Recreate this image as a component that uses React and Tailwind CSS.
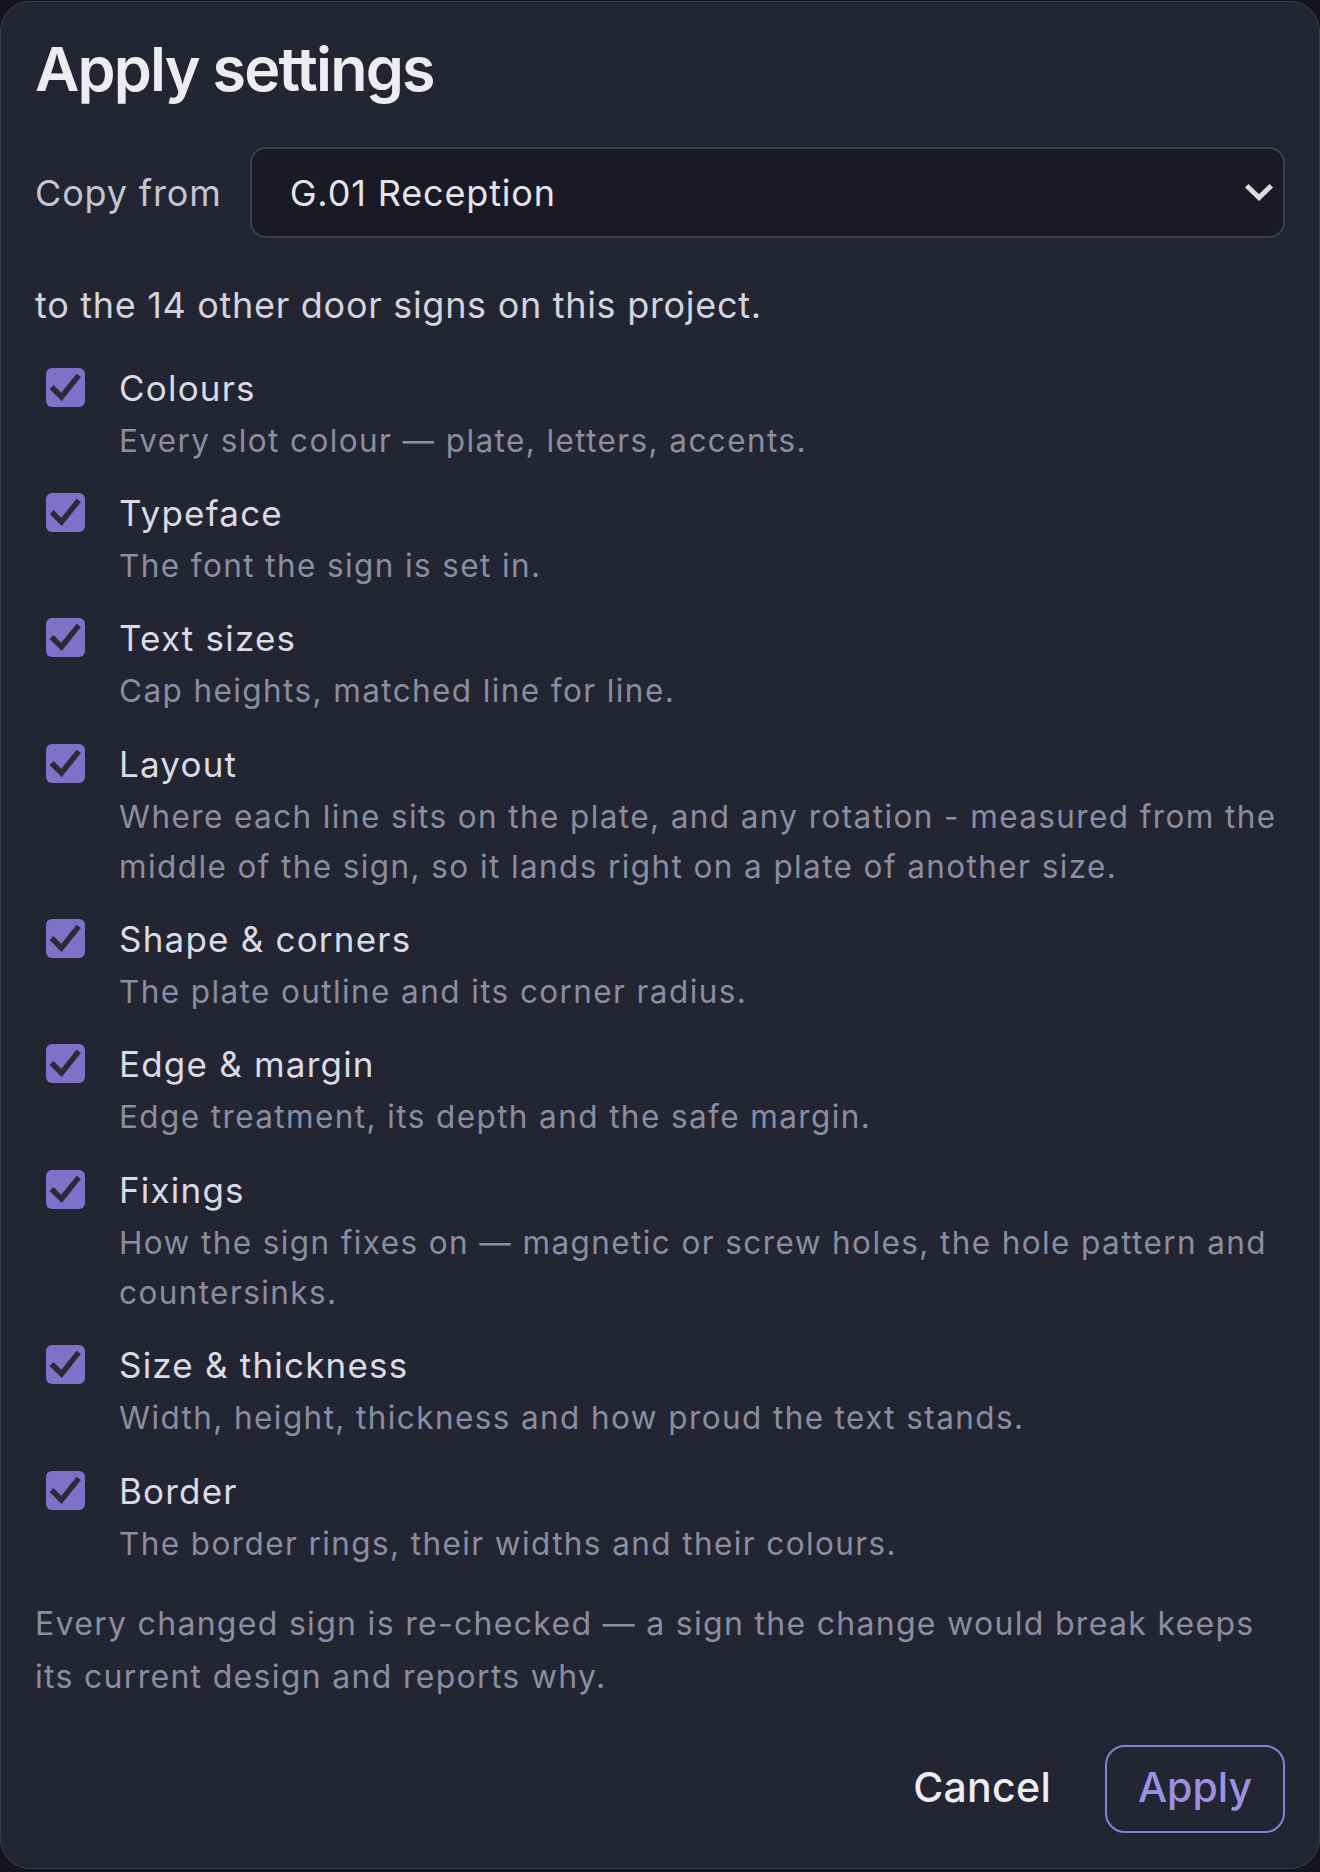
import React from "react";

const items = [
  { label: "Colours", desc: "Every slot colour — plate, letters, accents." },
  { label: "Typeface", desc: "The font the sign is set in." },
  { label: "Text sizes", desc: "Cap heights, matched line for line." },
  {
    label: "Layout",
    desc: "Where each line sits on the plate, and any rotation - measured from the middle of the sign, so it lands right on a plate of another size.",
  },
  { label: "Shape & corners", desc: "The plate outline and its corner radius." },
  { label: "Edge & margin", desc: "Edge treatment, its depth and the safe margin." },
  {
    label: "Fixings",
    desc: "How the sign fixes on — magnetic or screw holes, the hole pattern and countersinks.",
  },
  { label: "Size & thickness", desc: "Width, height, thickness and how proud the text stands." },
  { label: "Border", desc: "The border rings, their widths and their colours." },
];

function Check() {
  return (
    <div className="mt-[4px] flex h-[39px] w-[39px] shrink-0 items-center justify-center rounded-[6px] bg-[#7d71c8]">
      <svg width="39" height="39" viewBox="0 0 39 39" fill="none">
        <path d="M7.5 21 L15.5 29 L31 9.5" stroke="#2b2a35" strokeWidth="5.5" strokeLinecap="square" strokeLinejoin="miter" />
      </svg>
    </div>
  );
}

export default function App() {
  return (
    <div className="min-h-[1872px] bg-[#15161d] pt-[1px]" style={{ fontFamily: "Inter, 'Noto Sans', sans-serif" }}>
      <div className="flex h-[1868px] flex-col rounded-[30px] border border-[#3a3c4a] bg-[#232532] px-[34px] pt-[37px]">
        <h1 className="text-[61px] font-semibold leading-[60px] tracking-[-1.8px] text-[#ececf2]">Apply settings</h1>

        <div className="mt-[48px] flex items-center gap-[28px]">
          <span className="text-[36px] leading-[50px] tracking-[0.85px] text-[#c4c5d2]">Copy from</span>
          <div className="flex h-[91px] flex-1 items-center justify-between rounded-[16px] border-2 border-[#3d3f4d] bg-[#191a26] pl-[38px] pr-[10px]">
            <span className="text-[36px] tracking-[0.85px] text-[#e4e4ea]">G.01 Reception</span>
            <svg width="28" height="20" viewBox="0 0 28 20" fill="none">
              <path d="M3.5 4.5 L14 14.5 L24.5 4.5" stroke="#dcdce4" strokeWidth="5" strokeLinecap="square" />
            </svg>
          </div>
        </div>

        <p className="mt-[42px] text-[36px] leading-[50px] tracking-[0.7px] text-[#d3d4de]">to the 14 other door signs on this project.</p>

        <div className="mt-[34px] flex flex-col gap-[22.7px] pl-[11px]">
          {items.map((it) => (
            <div key={it.label} className="flex items-start gap-[34px]">
              <Check />
              <div className="flex flex-col">
                <span className="text-[35px] leading-[48px] tracking-[1.2px] text-[#dadbe5]">{it.label}</span>
                <span className="pt-[4px] text-[31.5px] leading-[50.5px] tracking-[1.4px] text-[#8b8da1]">{it.desc}</span>
              </div>
            </div>
          ))}
        </div>

        <p className="mt-[28px] text-[32px] leading-[53px] tracking-[1.3px] text-[#8b8da1]">
          Every changed sign is re-checked — a sign the change would break keeps its current design and reports why.
        </p>

        <div className="mt-[42px] flex items-center justify-end">
          <button className="mb-[4px] mr-[54px] text-[41px] font-medium leading-[50px] tracking-[0.3px] text-[#ececf1]">Cancel</button>
          <button className="flex h-[88px] items-center rounded-[20px] border-2 border-[#8a7ed6] px-[31px] pb-[4px] text-[41px] font-medium leading-[50px] text-[#9c90e2]">
            Apply
          </button>
        </div>
      </div>
    </div>
  );
}
